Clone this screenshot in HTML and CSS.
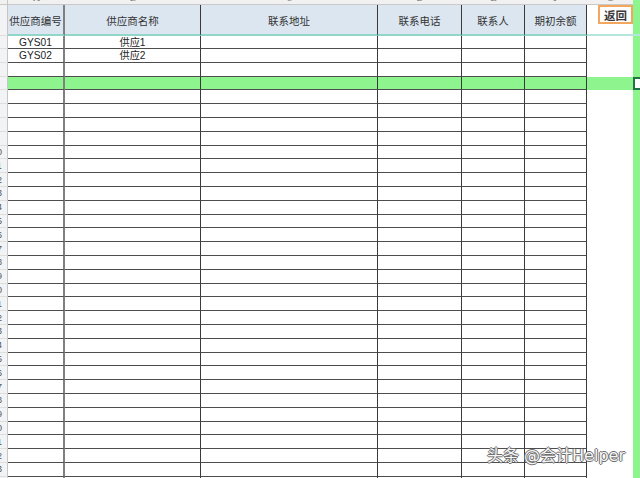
FILE: index.html
```html
<!DOCTYPE html>
<html lang="zh-CN">
<head>
<meta charset="utf-8">
<title>供应商</title>
<link rel="stylesheet" href="styles.css">
</head>
<body>
<div class="sheet">
  <div class="row strip">
    <div class="corner"></div>
    <div class="col"><span class="letter">A</span></div>
    <div class="col"><span class="letter">B</span></div>
    <div class="col"><span class="letter">C</span></div>
    <div class="col"><span class="letter">D</span></div>
    <div class="col"><span class="letter">E</span></div>
    <div class="col"><span class="letter">F</span></div>
    <div class="col"><span class="letter">G</span></div>
    <div class="g"></div>
  </div>
  <div class="row hdr">
    <div class="rh"><span>1</span></div>
    <div class="h c1">供应商编号</div>
    <div class="h">供应商名称</div>
    <div class="h">联系地址</div>
    <div class="h">联系电话</div>
    <div class="h">联系人</div>
    <div class="h">期初余额</div>
    <div class="h blank"></div>
    <div class="g hg"></div>
  </div>
  <div class="row r first"><div class="rh"><span>2</span></div><div class="c c1">GYS01</div><div class="c">供应1</div><div class="c"></div><div class="c"></div><div class="c"></div><div class="c"></div><div class="e"></div><div class="g"></div></div>
  <div class="row r"><div class="rh"><span>3</span></div><div class="c c1">GYS02</div><div class="c">供应2</div><div class="c"></div><div class="c"></div><div class="c"></div><div class="c"></div><div class="e"></div><div class="g"></div></div>
  <div class="row r"><div class="rh"><span>4</span></div><div class="c c1"></div><div class="c"></div><div class="c"></div><div class="c"></div><div class="c"></div><div class="c"></div><div class="e"></div><div class="g"></div></div>
  <div class="row r sel"><div class="rh"><span>5</span></div><div class="c c1"></div><div class="c"></div><div class="c"></div><div class="c"></div><div class="c"></div><div class="c"></div><div class="e"></div><div class="active"></div></div>
  <div class="row r"><div class="rh"><span>6</span></div><div class="c c1"></div><div class="c"></div><div class="c"></div><div class="c"></div><div class="c"></div><div class="c"></div><div class="e"></div><div class="g"></div></div>
  <div class="row r"><div class="rh"><span>7</span></div><div class="c c1"></div><div class="c"></div><div class="c"></div><div class="c"></div><div class="c"></div><div class="c"></div><div class="e"></div><div class="g"></div></div>
  <div class="row r"><div class="rh"><span>8</span></div><div class="c c1"></div><div class="c"></div><div class="c"></div><div class="c"></div><div class="c"></div><div class="c"></div><div class="e"></div><div class="g"></div></div>
  <div class="row r"><div class="rh"><span>9</span></div><div class="c c1"></div><div class="c"></div><div class="c"></div><div class="c"></div><div class="c"></div><div class="c"></div><div class="e"></div><div class="g"></div></div>
  <div class="row r"><div class="rh"><span>10</span></div><div class="c c1"></div><div class="c"></div><div class="c"></div><div class="c"></div><div class="c"></div><div class="c"></div><div class="e"></div><div class="g"></div></div>
  <div class="row r"><div class="rh"><span>11</span></div><div class="c c1"></div><div class="c"></div><div class="c"></div><div class="c"></div><div class="c"></div><div class="c"></div><div class="e"></div><div class="g"></div></div>
  <div class="row r"><div class="rh"><span>12</span></div><div class="c c1"></div><div class="c"></div><div class="c"></div><div class="c"></div><div class="c"></div><div class="c"></div><div class="e"></div><div class="g"></div></div>
  <div class="row r"><div class="rh"><span>13</span></div><div class="c c1"></div><div class="c"></div><div class="c"></div><div class="c"></div><div class="c"></div><div class="c"></div><div class="e"></div><div class="g"></div></div>
  <div class="row r"><div class="rh"><span>14</span></div><div class="c c1"></div><div class="c"></div><div class="c"></div><div class="c"></div><div class="c"></div><div class="c"></div><div class="e"></div><div class="g"></div></div>
  <div class="row r"><div class="rh"><span>15</span></div><div class="c c1"></div><div class="c"></div><div class="c"></div><div class="c"></div><div class="c"></div><div class="c"></div><div class="e"></div><div class="g"></div></div>
  <div class="row r"><div class="rh"><span>16</span></div><div class="c c1"></div><div class="c"></div><div class="c"></div><div class="c"></div><div class="c"></div><div class="c"></div><div class="e"></div><div class="g"></div></div>
  <div class="row r"><div class="rh"><span>17</span></div><div class="c c1"></div><div class="c"></div><div class="c"></div><div class="c"></div><div class="c"></div><div class="c"></div><div class="e"></div><div class="g"></div></div>
  <div class="row r"><div class="rh"><span>18</span></div><div class="c c1"></div><div class="c"></div><div class="c"></div><div class="c"></div><div class="c"></div><div class="c"></div><div class="e"></div><div class="g"></div></div>
  <div class="row r"><div class="rh"><span>19</span></div><div class="c c1"></div><div class="c"></div><div class="c"></div><div class="c"></div><div class="c"></div><div class="c"></div><div class="e"></div><div class="g"></div></div>
  <div class="row r"><div class="rh"><span>20</span></div><div class="c c1"></div><div class="c"></div><div class="c"></div><div class="c"></div><div class="c"></div><div class="c"></div><div class="e"></div><div class="g"></div></div>
  <div class="row r"><div class="rh"><span>21</span></div><div class="c c1"></div><div class="c"></div><div class="c"></div><div class="c"></div><div class="c"></div><div class="c"></div><div class="e"></div><div class="g"></div></div>
  <div class="row r"><div class="rh"><span>22</span></div><div class="c c1"></div><div class="c"></div><div class="c"></div><div class="c"></div><div class="c"></div><div class="c"></div><div class="e"></div><div class="g"></div></div>
  <div class="row r"><div class="rh"><span>23</span></div><div class="c c1"></div><div class="c"></div><div class="c"></div><div class="c"></div><div class="c"></div><div class="c"></div><div class="e"></div><div class="g"></div></div>
  <div class="row r"><div class="rh"><span>24</span></div><div class="c c1"></div><div class="c"></div><div class="c"></div><div class="c"></div><div class="c"></div><div class="c"></div><div class="e"></div><div class="g"></div></div>
  <div class="row r"><div class="rh"><span>25</span></div><div class="c c1"></div><div class="c"></div><div class="c"></div><div class="c"></div><div class="c"></div><div class="c"></div><div class="e"></div><div class="g"></div></div>
  <div class="row r"><div class="rh"><span>26</span></div><div class="c c1"></div><div class="c"></div><div class="c"></div><div class="c"></div><div class="c"></div><div class="c"></div><div class="e"></div><div class="g"></div></div>
  <div class="row r"><div class="rh"><span>27</span></div><div class="c c1"></div><div class="c"></div><div class="c"></div><div class="c"></div><div class="c"></div><div class="c"></div><div class="e"></div><div class="g"></div></div>
  <div class="row r"><div class="rh"><span>28</span></div><div class="c c1"></div><div class="c"></div><div class="c"></div><div class="c"></div><div class="c"></div><div class="c"></div><div class="e"></div><div class="g"></div></div>
  <div class="row r"><div class="rh"><span>29</span></div><div class="c c1"></div><div class="c"></div><div class="c"></div><div class="c"></div><div class="c"></div><div class="c"></div><div class="e"></div><div class="g"></div></div>
  <div class="row r"><div class="rh"><span>30</span></div><div class="c c1"></div><div class="c"></div><div class="c"></div><div class="c"></div><div class="c"></div><div class="c"></div><div class="e"></div><div class="g"></div></div>
  <div class="row r"><div class="rh"><span>31</span></div><div class="c c1"></div><div class="c"></div><div class="c"></div><div class="c"></div><div class="c"></div><div class="c"></div><div class="e"></div><div class="g"></div></div>
  <div class="row r"><div class="rh"><span>32</span></div><div class="c c1"></div><div class="c"></div><div class="c"></div><div class="c"></div><div class="c"></div><div class="c"></div><div class="e"></div><div class="g"></div></div>
  <div class="row r"><div class="rh"><span>33</span></div><div class="c c1"></div><div class="c"></div><div class="c"></div><div class="c"></div><div class="c"></div><div class="c"></div><div class="e"></div><div class="g"></div></div>
  <div class="row r"><div class="rh"><span>34</span></div><div class="c c1"></div><div class="c"></div><div class="c"></div><div class="c"></div><div class="c"></div><div class="c"></div><div class="e"></div><div class="g"></div></div>
</div>
<button class="back">返回</button>
<div class="watermark">头条 @会计Helper</div>
</body>
</html>
```
FILE: styles.css
```css
html, body {
  margin: 0;
  padding: 0;
}
body {
  width: 640px;
  height: 478px;
  overflow: hidden;
  position: relative;
  background: #ffffff;
  font-family: "Liberation Sans", "Noto Sans CJK SC", sans-serif;
  color: #222;
}
.sheet {
  width: 640px;
  height: 478px;
  overflow: hidden;
}
.row {
  display: grid;
  grid-template-columns: 8px 57px 136px 177px 84px 63px 62px 46px 7px;
}
.row > div {
  box-sizing: border-box;
  overflow: hidden;
}
/* column letters strip */
.strip {
  height: 5px;
}
.strip .corner,
.strip .col {
  background: #f1f1f1;
  border-bottom: 1px solid #c9c9c9;
  display: flex;
  justify-content: center;
}
.strip .corner {
  border-right: 1px solid #c6c6c6;
}
.letter {
  font-family: "DejaVu Serif", serif;
  font-size: 9px;
  line-height: 9px;
  color: #777;
  margin-top: -6px;
}
.g {
  background: #8ef58e;
}
/* row headers */
.rh {
  background: #f2f3f5;
  border-right: 1px solid #c6c6c6;
  border-bottom: 1px solid #dedede;
  display: flex;
  justify-content: flex-end;
  align-items: center;
}
.rh span {
  flex: none;
  width: 20px;
  text-align: center;
  font-size: 9px;
  color: #555;
}
/* header row */
.hdr {
  height: 31px;
}
.h {
  background: #dce6f1;
  border-bottom: 2px solid #92d6c9;
  border-right: 1px solid #3a3a3a;
  display: flex;
  align-items: center;
  justify-content: center;
  padding-top: 2px;
  font-size: 10.5px;
  color: #333;
  white-space: nowrap;
}
.h.c1 {
  border-right: 2px solid #808080;
}
.h.blank {
  background: #ffffff;
  border-right: none;
  border-bottom: 2px solid #b5e6dc;
}
.hg {
  border-bottom: 2px solid #b5e6dc;
}
/* body rows */
.r {
  height: 13.8px;
}
.r.first {
  height: 13px;
}
.c {
  border-bottom: 1px solid #4d4d4d;
  border-right: 1px solid #3a3a3a;
  font-size: 10.2px;
  line-height: 14px;
  text-align: center;
  white-space: nowrap;
}
.c.c1 {
  border-right: 2px solid #808080;
}
.sel .c,
.sel .e {
  background: #8ef58e;
}
.active {
  background: #ffffff;
  border: 2px solid #217346;
  border-right: none;
}
/* overlays */
.back {
  position: absolute;
  left: 598px;
  top: 5px;
  width: 35px;
  height: 19px;
  box-sizing: border-box;
  margin: 0;
  padding: 0;
  background: #ffffff;
  border: 2px solid #f2a65e;
  font-family: "Noto Sans CJK SC", sans-serif;
  font-size: 11.5px;
  font-weight: bold;
  line-height: 14px;
  color: #3a3a3a;
}
.watermark {
  position: absolute;
  left: 487px;
  top: 446px;
  font-family: "DejaVu Sans", "Noto Sans CJK SC", sans-serif;
  font-size: 16px;
  line-height: 20px;
  color: #f6f6f6;
  white-space: nowrap;
  text-shadow: 1px 0 0 #6e6e6e, -1px 0 0 #6e6e6e, 0 1px 0 #6e6e6e, 0 -1px 0 #6e6e6e;
}
```
